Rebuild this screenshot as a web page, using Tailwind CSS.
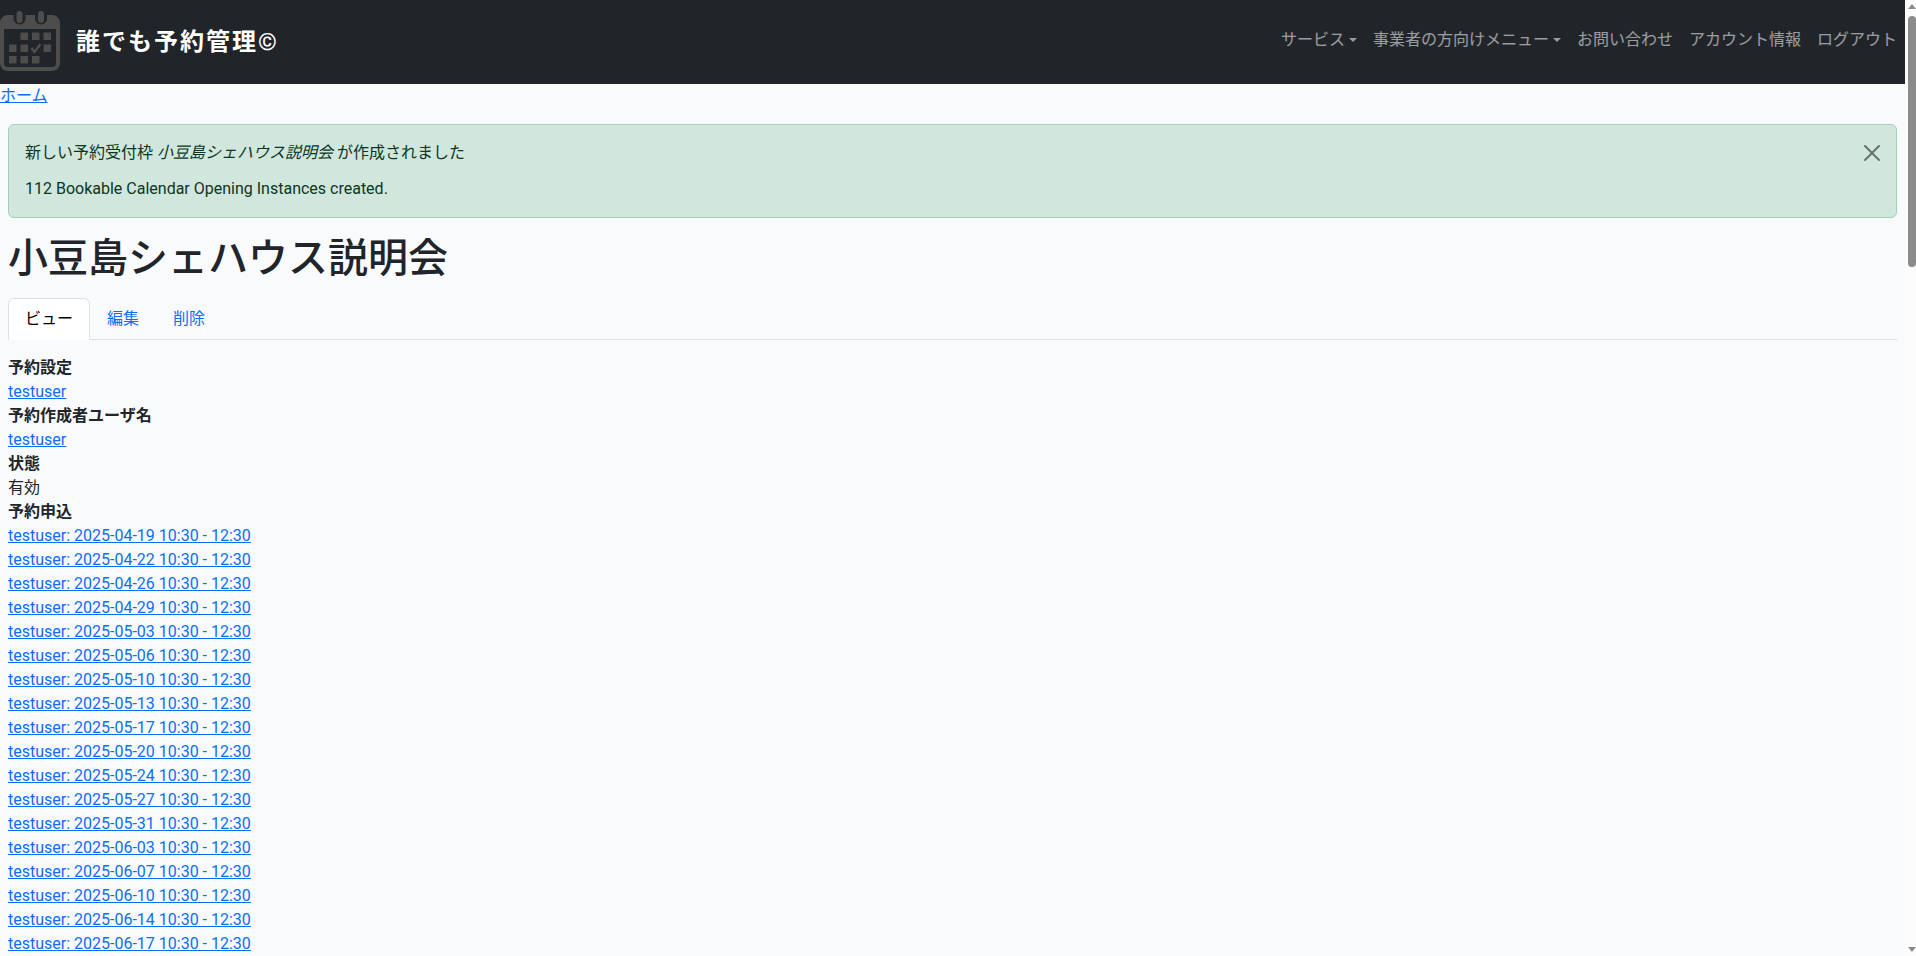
<!DOCTYPE html>
<html lang="ja">
<head>
    <meta charset="UTF-8">
    <meta name="viewport" content="width=device-width, initial-scale=1.0">
    <title>小豆島シェハウス説明会 | 誰でも予約管理</title>
    <script src="https://cdn.jsdelivr.net/npm/@tailwindcss/browser@4"></script>
</head>
<body class="flex h-screen overflow-hidden bg-[#f8fafc] font-['Roboto','Noto_Sans_CJK_JP',sans-serif] text-base text-[#212529]">

    <div class="min-w-0 flex-1">
        <!-- ナビゲーション -->
        <header class="flex h-21 items-start justify-between bg-[#212529] pr-2">
            <a href="#" class="flex items-start gap-3.5 pt-2 text-2xl font-bold tracking-[2px] text-white">
                <svg class="size-16 -ml-0.5 text-[#4d4d4d]" viewBox="-2 8 64 64" fill="currentColor" aria-hidden="true">
                    <path fill-rule="evenodd" d="M8 15h5.500v3.500a6 6 0 0 0 12 0V15h9.500v3.500a6 6 0 0 0 12 0V15h5a8 8 0 0 1 8 8v40a8 8 0 0 1-8 8H8a8 8 0 0 1-8-8V23a8 8 0 0 1 8-8zM4 29v34a4 4 0 0 0 4 4h44a4 4 0 0 0 4-4V29z"/>
                    <rect x="16.500" y="11" width="6" height="12" rx="3"/>
                    <rect x="38" y="11" width="6" height="12" rx="3"/>
                    <path d="M20.500 32.500h7.500V40h-7.500zM32 32.500h7.500V40H32zM43.500 32.500H51V40h-7.500zM9 44.500h7.500V52H9zM20.500 44.500h7.500V52h-7.500zM43.500 44.500H51V52h-7.500zM9 56h7.500v7.500H9zM20.500 56h7.500v7.500h-7.500zM32 56h7.500v7.500H32z"/>
                    <path d="M31.500 48l3 4 6-8" fill="none" stroke="currentColor" stroke-width="2.500"/>
                </svg>
                <span class="pt-4 leading-9">誰でも予約管理©</span>
            </a>
            <nav class="flex gap-4 pt-7 leading-6 text-white/55">
                <button type="button" class="flex items-center gap-1">サービス
                    <svg class="h-1 w-2" viewBox="0 0 8 4" fill="currentColor"><path d="M0 0h8L4 4z"/></svg>
                </button>
                <button type="button" class="flex items-center gap-1">事業者の方向けメニュー
                    <svg class="h-1 w-2" viewBox="0 0 8 4" fill="currentColor"><path d="M0 0h8L4 4z"/></svg>
                </button>
                <a href="#">お問い合わせ</a>
                <a href="#">アカウント情報</a>
                <a href="#">ログアウト</a>
            </nav>
        </header>

        <div class="leading-6">
            <a href="#" class="text-[#0d6efd] underline">ホーム</a>
        </div>

        <main class="px-2 pt-4">
            <!-- 完了メッセージ -->
            <div role="alert" class="flex items-start justify-between rounded-md border border-[#a3cfbb] bg-[#d1e7dd] p-4 leading-6 text-[#0a3622]">
                <div class="space-y-3">
                    <p>新しい予約受付枠 <em>小豆島シェハウス説明会</em> が作成されました</p>
                    <p>112 Bookable Calendar Opening Instances created.</p>
                </div>
                <button type="button" aria-label="閉じる" class="pt-1 text-black/50">
                    <svg class="size-4" viewBox="0 0 16 16" fill="currentColor"><path d="M.293.293a1 1 0 0 1 1.414 0L8 6.586 14.293.293a1 1 0 1 1 1.414 1.414L9.414 8l6.293 6.293a1 1 0 0 1-1.414 1.414L8 9.414l-6.293 6.293a1 1 0 0 1-1.414-1.414L6.586 8 .293 1.707a1 1 0 0 1 0-1.414z"/></svg>
                </button>
            </div>

            <h1 class="pt-4 pb-3.5 text-[40px] leading-[50px] font-medium">小豆島シェハウス説明会</h1>

            <!-- タブ -->
            <nav class="flex border-b border-[#dee2e6] leading-6 text-[#0d6efd]">
                <a href="#" class="-mb-px rounded-t-md border border-[#dee2e6] border-b-white bg-white px-4 py-2 text-black">ビュー</a>
                <a href="#" class="-mb-px border border-transparent px-4 py-2">編集</a>
                <a href="#" class="-mb-px border border-transparent px-4 py-2">削除</a>
            </nav>

            <dl class="pt-4 leading-6">
                <dt class="font-bold">予約設定</dt>
                <dd><a href="#" class="text-[#0d6efd] underline">testuser</a></dd>
                <dt class="font-bold">予約作成者ユーザ名</dt>
                <dd><a href="#" class="text-[#0d6efd] underline">testuser</a></dd>
                <dt class="font-bold">状態</dt>
                <dd>有効</dd>
                <dt class="font-bold">予約申込</dt>
                <dd><ul id="instances"></ul></dd>
            </dl>
        </main>
    </div>

    <!-- スクロールバー -->
    <div class="flex w-[11px] shrink-0 flex-col items-end justify-between bg-[#fcfcfc] pt-1 pb-1 text-[#8b8b8b]" aria-hidden="true">
        <div class="flex flex-col gap-[7px]">
            <svg class="h-[5px] w-2" viewBox="0 0 8 5" fill="currentColor"><path d="M4 0l4 5H0z"/></svg>
            <div class="h-[251px] w-2 rounded-full bg-[#8b8b8b]"></div>
        </div>
        <svg class="h-[5px] w-2" viewBox="0 0 8 5" fill="currentColor"><path d="M0 0h8L4 5z"/></svg>
    </div>

    <script>
        // 予約枠の日付一覧
        const dates = [
            '2025-04-19', '2025-04-22', '2025-04-26', '2025-04-29', '2025-05-03', '2025-05-06',
            '2025-05-10', '2025-05-13', '2025-05-17', '2025-05-20', '2025-05-24', '2025-05-27',
            '2025-05-31', '2025-06-03', '2025-06-07', '2025-06-10', '2025-06-14', '2025-06-17',
        ];
        const list = document.getElementById('instances');

        dates.forEach(date => {
            const item = document.createElement('li');
            const link = document.createElement('a');
            link.href = '#';
            link.className = 'text-[#0d6efd] underline';
            link.textContent = `testuser: ${date} 10:30 - 12:30`;
            item.appendChild(link);
            list.appendChild(item);
        });
    </script>
</body>
</html>
